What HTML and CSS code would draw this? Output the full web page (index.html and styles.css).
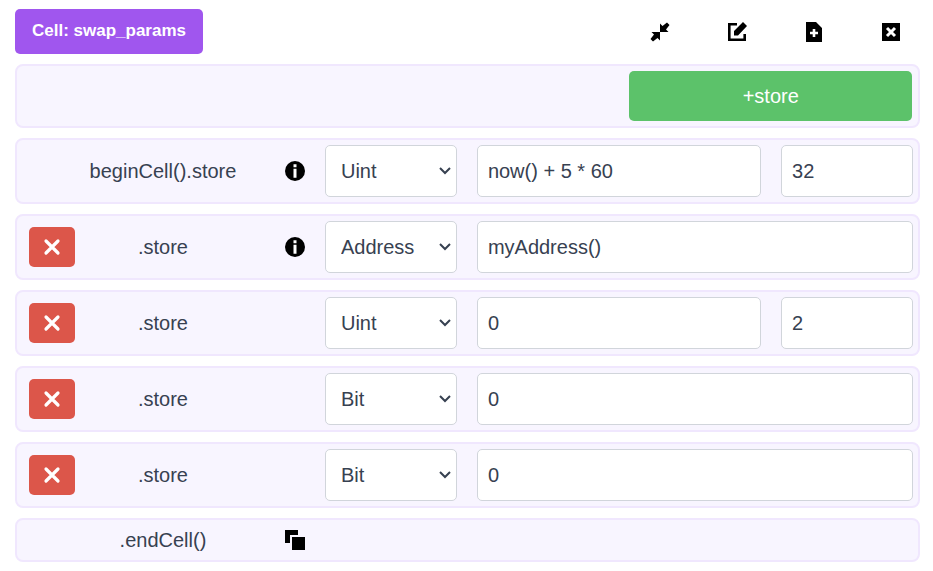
FILE: index.html
```html
<!DOCTYPE html>
<html lang="en">
<head>
<meta charset="utf-8">
<title>Cell: swap_params</title>
<link rel="stylesheet" href="styles.css">
</head>
<body>
<svg class="defs" aria-hidden="true">
  <symbol id="info" viewBox="0 0 20 20"><circle cx="10" cy="10" r="10"/><path fill="#fff" d="M8.500 3.300h3v3h-3zM8.500 7.700h3v9h-3z"/></symbol>
  <symbol id="cross" viewBox="0 0 20 20"><path fill="none" stroke="#fff" stroke-width="3.200" stroke-linecap="round" d="M4 4l12 12M16 4l-12 12"/></symbol>
</svg>
<main class="cell">
  <header class="toolbar">
    <button type="button" class="title">Cell: swap_params</button>
    <div class="actions">
      <button type="button" class="action" aria-label="Collapse"><svg viewBox="0 0 20 20"><path d="M10 1.500v8.500h8.500l-2.500-2.500 3.500-4.500-2.500-2.500-4.500 3.500zM10 18.500v-8.500h-8.500l2.500 2.500-3.500 4.500 2.500 2.500 4.500-3.500z"/></svg></button>
      <button type="button" class="action" aria-label="Edit"><svg viewBox="0 0 20 20"><path d="M1 1h9v2.600h-6.400v12.800h12.800v-4.400h2.600v7h-18zM7 13.500v-4.500l9-9 4 4-9 9.500z"/></svg></button>
      <button type="button" class="action" aria-label="Add file"><svg viewBox="0 0 20 20"><path fill-rule="evenodd" d="M2 0h10l6 6v14h-16zM8.700 7v2.700h-2.700v2.600h2.700v2.700h2.600v-2.700h2.700v-2.600h-2.700v-2.700z"/></svg></button>
      <button type="button" class="action" aria-label="Close"><svg viewBox="0 0 20 20"><path d="M1 1h18v18h-18z"/><path fill="none" stroke="#fff" stroke-width="3" d="M6 6l8 8M14 6l-8 8"/></svg></button>
    </div>
  </header>

  <section class="row row-add">
    <button type="button" class="add">+store</button>
  </section>

  <section class="row">
    <span class="label">beginCell().store</span>
    <svg class="icon" role="img" aria-label="Info"><use href="#info"/></svg>
    <select class="field type" aria-label="Type"><option>Uint</option><option>Address</option><option>Bit</option></select>
    <input class="field value" type="text" aria-label="Value" value="now() + 5 * 60">
    <input class="field bits" type="text" aria-label="Bits" value="32">
  </section>

  <section class="row">
    <button type="button" class="remove" aria-label="Remove"><svg><use href="#cross"/></svg></button>
    <span class="label">.store</span>
    <svg class="icon" role="img" aria-label="Info"><use href="#info"/></svg>
    <select class="field type" aria-label="Type"><option>Uint</option><option selected>Address</option><option>Bit</option></select>
    <input class="field value wide" type="text" aria-label="Value" value="myAddress()">
  </section>

  <section class="row">
    <button type="button" class="remove" aria-label="Remove"><svg><use href="#cross"/></svg></button>
    <span class="label">.store</span>
    <select class="field type" aria-label="Type"><option>Uint</option><option>Address</option><option>Bit</option></select>
    <input class="field value" type="text" aria-label="Value" value="0">
    <input class="field bits" type="text" aria-label="Bits" value="2">
  </section>

  <section class="row">
    <button type="button" class="remove" aria-label="Remove"><svg><use href="#cross"/></svg></button>
    <span class="label">.store</span>
    <select class="field type" aria-label="Type"><option>Uint</option><option>Address</option><option selected>Bit</option></select>
    <input class="field value wide" type="text" aria-label="Value" value="0">
  </section>

  <section class="row">
    <button type="button" class="remove" aria-label="Remove"><svg><use href="#cross"/></svg></button>
    <span class="label">.store</span>
    <select class="field type" aria-label="Type"><option>Uint</option><option>Address</option><option selected>Bit</option></select>
    <input class="field value wide" type="text" aria-label="Value" value="0">
  </section>

  <section class="row">
    <span class="label">.endCell()</span>
    <button type="button" class="icon copy" aria-label="Copy"><svg viewBox="0 0 20 20"><path d="M0 0h13v5h-8v8h-5z"/><path d="M7 7h13v13h-13z"/></svg></button>
  </section>
</main>
</body>
</html>
```
FILE: styles.css
```css
* {
  box-sizing: border-box;
}

body {
  margin: 0;
  background: #fff;
  color: #374151;
  font: 20px/30px "Liberation Sans", Arial, sans-serif;
}

button,
input,
select {
  margin: 0;
  font: inherit;
  color: inherit;
}

button {
  padding: 0;
  border: 0;
  background: none;
  cursor: pointer;
}

svg {
  display: block;
  width: 20px;
  height: 20px;
}

.defs {
  display: none;
}

.cell {
  display: flex;
  flex-direction: column;
  gap: 10px;
  padding: 9px 13px 9px 15px;
}

.toolbar {
  display: flex;
  justify-content: space-between;
  align-items: center;
}

.title {
  height: 45px;
  padding: 0 17px 2px;
  border-radius: 5px;
  background: #a056ee;
  color: #fff;
  font-size: 17px;
  font-weight: bold;
}

.actions {
  display: flex;
  gap: 19px;
}

.action {
  display: flex;
  justify-content: center;
  width: 58px;
  color: #000;
}

.row {
  display: grid;
  grid-template-columns: 48px minmax(0, 13fr) 56px minmax(0, 13fr) minmax(0, 28fr) minmax(0, 13fr);
  column-gap: 20px;
  align-items: center;
  padding: 5px 5px 5px 12px;
  border: 2px solid #f0e7fe;
  border-radius: 8px;
  background: #f8f5ff;
}

.row > * {
  grid-row: 1;
}

.row-add {
  display: flex;
  justify-content: flex-end;
  padding-right: 6px;
}

.add {
  width: 32%;
  height: 50px;
  border-radius: 5px;
  background: #5cc26a;
  color: #fff;
}

.remove {
  grid-column: 1;
  display: flex;
  align-items: center;
  justify-content: center;
  width: 46px;
  height: 40px;
  border-radius: 5px;
  background: #dc564a;
}

.label {
  grid-column: 2;
  display: flex;
  justify-content: center;
  white-space: nowrap;
}

.icon {
  grid-column: 3;
  justify-self: end;
  color: #000;
  fill: #000;
}

.field {
  width: 100%;
  height: 52px;
  padding: 0 10px;
  border: 1px solid #d1d5db;
  border-radius: 5px;
  background: #fff;
}

.type {
  grid-column: 4;
  padding: 0 24px 0 15px;
  appearance: none;
  background: #fff url("data:image/svg+xml,%3Csvg xmlns='http://www.w3.org/2000/svg' viewBox='0 0 12 8'%3E%3Cpath d='M1 1l5 5 5-5' fill='none' stroke='%23374151' stroke-width='2'/%3E%3C/svg%3E") no-repeat right 5px center / 12px 8px;
}

.value {
  grid-column: 5;
}

.wide {
  grid-column: 5 / 7;
}

.bits {
  grid-column: 6;
}
```
